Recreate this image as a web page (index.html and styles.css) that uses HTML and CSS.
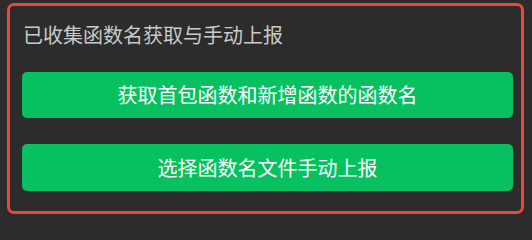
FILE: index.html
```html
<!DOCTYPE html>
<html lang="zh-CN">
<head>
<meta charset="utf-8">
<link rel="stylesheet" href="styles.css">
</head>
<body>
<div class="panel">
  <div class="title">已收集函数名获取与手动上报</div>
  <div class="actions">
    <button class="btn btn-first">获取首包函数和新增函数的函数名</button>
    <button class="btn btn-second">选择函数名文件手动上报</button>
  </div>
</div>
</body>
</html>
```

FILE: styles.css
```css
html, body {
  margin: 0;
  padding: 0;
  background: #2c2c2c;
  width: 532px;
  height: 226px;
  overflow: hidden;
}
body {
  font-family: "Noto Sans CJK SC", "Noto Sans", sans-serif;
}
.panel {
  box-sizing: border-box;
  margin: 3px 8px 0 7px;
  height: 211px;
  border: 3px solid #e8483d;
  border-radius: 7px;
  padding: 16px 8px 0 12px;
}
.title {
  color: #c9c9c9;
  font-size: 20px;
  line-height: 26px;
  height: 26px;
  padding-left: 1px;
}
.actions {
  display: flex;
  flex-direction: column;
  gap: 26px;
  margin-top: 24px;
}
.btn {
  display: block;
  width: 100%;
  height: 46px;
  border: none;
  border-radius: 5px;
  background: #07c160;
  color: #ffffff;
  font-family: "Noto Sans CJK SC", "Noto Sans", sans-serif;
  font-size: 20px;
  line-height: 46px;
  padding: 0;
  text-align: center;
}
.btn-second {
  height: 47px;
}
```
